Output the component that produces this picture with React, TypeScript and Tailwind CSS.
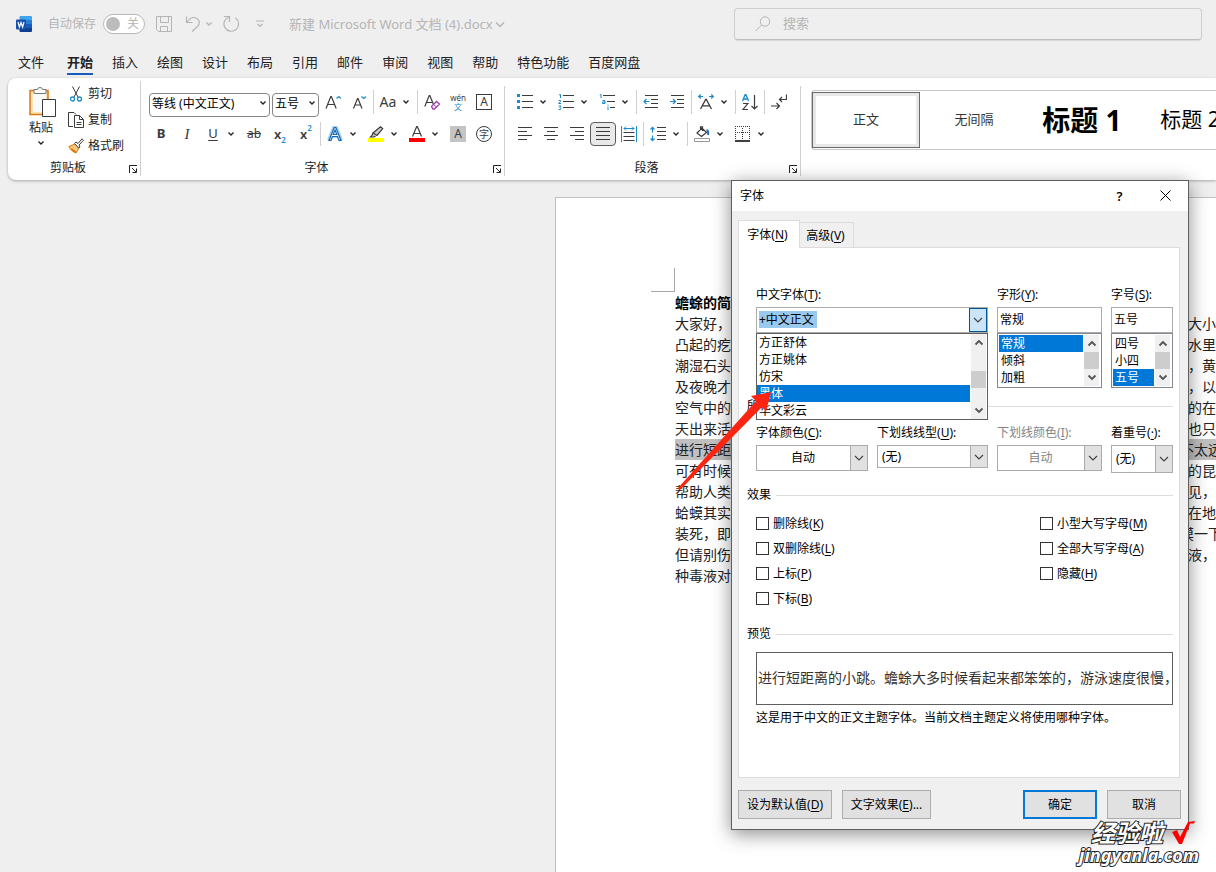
import type { ReactNode } from "react";
import clsx from "clsx";

const TABS = ["文件", "开始", "插入", "绘图", "设计", "布局", "引用", "邮件", "审阅", "视图", "帮助", "特色功能", "百度网盘"];

const LINES = [
  { left: "大家好，今", right: "大小、" },
  { left: "凸起的疙", right: "水里，" },
  { left: "潮湿石头", right: "，黄昏" },
  { left: "及夜晚才", right: "，以便" },
  { left: "空气中的", right: "的在白" },
  { left: "天出来活", right: "也只能" },
  { left: "进行短距", right: "不太远", selected: true, early: true },
  { left: "可有时候", right: "的昆虫" },
  { left: "帮助人类", right: "见，这" },
  { left: "蛤蟆其实", right: "在地上" },
  { left: "装死，即", right: "摸一下", early: true },
  { left: "但请别伤", right: "液，这" },
  { left: "种毒液对", right: "" },
];

const FONTS = ["方正舒体", "方正姚体", "仿宋", "黑体", "华文彩云"];

const STYLES = [
  { name: "正文", text: "text-[13px]", active: true },
  { name: "无间隔", text: "text-[13px]" },
  { name: "标题 1", text: "text-[28px] font-bold text-black" },
  { name: "标题 2", text: "text-[21px] text-black" },
];

const BLUE = "#1e8bcd";

function Svg({ children, w = 16, h = 16, className }: { children: ReactNode; w?: number; h?: number; className?: string }) {
  return (
    <svg width={w} height={h} viewBox={`0 0 ${w} ${h}`} fill="none" stroke="#3b3b3b" className={clsx("shrink-0", className)} aria-hidden="true">
      {children}
    </svg>
  );
}

function Chevron({ className }: { className?: string }) {
  return (
    <Svg w={8} h={6} className={className}>
      <path d="M1.500 1.500 4 4 6.500 1.500" stroke="currentColor" strokeWidth="1.300" />
    </Svg>
  );
}

function IconButton({ label, children, pressed }: { label: string; children: ReactNode; pressed?: boolean }) {
  return (
    <button
      type="button"
      aria-label={label}
      aria-pressed={pressed}
      className={clsx(
        "flex h-6 w-[26px] shrink-0 items-center justify-center rounded-[4px] text-[#3b3b3b]",
        pressed && "border border-[#5c5c5c] bg-[#e9e9e9]"
      )}
    >
      {children}
    </button>
  );
}

function SplitButton({ label, children }: { label: string; children: ReactNode }) {
  return (
    <div className="flex w-[41px] shrink-0 items-center">
      <IconButton label={label}>{children}</IconButton>
      <button type="button" aria-label={`${label}选项`} className="flex h-6 w-[10px] items-center justify-center text-[#222]">
        <Chevron />
      </button>
    </div>
  );
}

function Sep() {
  return <div className="mx-px h-6 w-px shrink-0 bg-[#d0d0d0]" />;
}

function Group({ title, className, children }: { title: string; className?: string; children: ReactNode }) {
  return (
    <section className={clsx("flex shrink-0 flex-col border-r border-[#d0d0d0]", className)}>
      <div className="flex-1">{children}</div>
      <div className="flex h-4 items-center">
        <h2 className="flex-1 text-center text-[12px] leading-4 text-[#222]">{title}</h2>
        <button type="button" aria-label={`${title}设置`} className="mr-0.5 pt-0.5">
          <Svg w={10} h={10}>
            <path d="M1.500 9V1.500H9M4 4l4 4M8.500 4.500v4h-4" stroke="#222" />
          </Svg>
        </button>
      </div>
    </section>
  );
}

function RibbonSelect({ label, value, className }: { label: string; value: string; className: string }) {
  return (
    <div className={clsx("relative h-6 shrink-0", className)}>
      <select aria-label={label} className="h-full w-full appearance-none rounded-[4px] border border-[#868686] bg-white pb-0.5 pl-0.5 text-[12px] leading-5 text-black">
        <option>{value}</option>
      </select>
      <Chevron className="pointer-events-none absolute top-[10px] right-[3px] text-[#222]" />
    </div>
  );
}

function TitleBar() {
  return (
    <header className="flex h-12 items-center text-[#b5b5b5]">
      <div className="flex w-[734px] shrink-0 items-center pl-4">
        <Svg>
          <rect x="3.500" width="12.500" height="4.500" rx="1" fill="#41a5ee" stroke="none" />
          <path d="M3.500 4H16v4H3.500z" fill="#2b7cd3" stroke="none" />
          <path d="M3.500 8H16v4H3.500z" fill="#185abd" stroke="none" />
          <path d="M3.500 12H16v3a1 1 0 0 1-1 1H4.500a1 1 0 0 1-1-1z" fill="#103f91" stroke="none" />
          <rect y="3.500" width="10" height="10" rx="1" fill="#1651ad" stroke="none" />
          <path d="M2 6l1.400 5L5 6.500 6.600 11 8 6" stroke="#fff" strokeWidth="1.200" />
        </Svg>
        <span className="ml-4 text-[12px] leading-5">自动保存</span>
        <button
          type="button"
          role="switch"
          aria-checked="false"
          aria-label="自动保存"
          className="ml-[7px] flex h-5 w-[42px] items-center gap-[7px] rounded-full border border-[#b9b9b9] bg-white pl-0.5 text-[12px] leading-4"
        >
          <span className="h-3.5 w-3.5 rounded-full bg-[#bcbcbc]" />
          关
        </button>
        <button type="button" aria-label="保存" className="ml-[11px]">
          <Svg>
            <path d="M.5.5h15v15h-13l-2-2zM4.500.5v6h8v-6M4.500 15.500v-5h7v5" stroke="#b5b5b5" />
          </Svg>
        </button>
        <button type="button" aria-label="撤消" className="ml-[13px] flex items-center gap-1">
          <Svg>
            <path d="M1.500.5v6h6M1.500 6.500C5 2 9 .5 12 2.500s3 5.500.5 8L7 15.500" stroke="#b5b5b5" strokeWidth="1.200" />
          </Svg>
          <Chevron />
        </button>
        <button type="button" aria-label="恢复" className="ml-[10px]">
          <Svg w={17}>
            <path d="M1 .5h5.500V6M6 1A7.300 7.300 0 1 0 12.500 2" stroke="#b5b5b5" strokeWidth="1.200" />
          </Svg>
        </button>
        <button type="button" aria-label="自定义快速访问工具栏" className="ml-4">
          <Svg w={8} h={8}>
            <path d="M0 1h8M1.500 4 4 6.500 6.500 4" stroke="#b5b5b5" strokeWidth="1.200" />
          </Svg>
        </button>
        <h1 className="ml-[25px] text-[13px] leading-5">新建 Microsoft Word 文档 (4).docx</h1>
        <Svg w={10} h={7} className="ml-0.5">
          <path d="M1 1.500l4 4 4-4" stroke="#b5b5b5" strokeWidth="1.500" />
        </Svg>
      </div>
      <label className="mr-[14px] flex h-8 flex-1 items-center gap-3 rounded-[4px] border border-[#cfcfcf] border-b-[#bdbdbd] pl-5 shadow-[0_1px_1px_rgba(0,0,0,0.1)]">
        <Svg>
          <circle cx="10" cy="5.500" r="4.700" stroke="#b5b5b5" />
          <path d="M6.500 9 .5 15" stroke="#b5b5b5" />
        </Svg>
        <input type="search" placeholder="搜索" aria-label="搜索" className="min-w-0 flex-1 bg-transparent pb-0.5 text-[13px] leading-5 outline-none placeholder:text-[#b5b5b5]" />
      </label>
    </header>
  );
}

function Clipboard() {
  return (
    <Group title="剪贴板" className="w-[133px]">
      <div className="flex text-[12px] text-[#222]">
        <button type="button" className="ml-[18px] flex w-[30px] flex-col items-center self-start pt-1.5">
          <Svg w={30} h={31}>
            <path d="M4 3.500h18v24H4z" stroke="#dd7512" strokeWidth="1.500" fill="#f9e4b5" />
            <path d="M7 6h13v19H7z" fill="#fafafa" stroke="none" />
            <path d="M8 6.500v-4h3.500a2.500 2 0 0 1 5 0H20v4z" fill="#fff" stroke="#777" />
            <path d="M16.500 12.500h13v17h-13z" fill="#fff" />
          </Svg>
          <span className="leading-5">粘贴</span>
          <Chevron className="mt-0.5" />
        </button>
        <div className="ml-3 flex flex-col">
          <button type="button" className="flex h-[26px] items-center gap-1">
            <Svg>
              <path d="M4.500.5 10 11M11.500.5 6 11" />
              <circle cx="4.500" cy="13" r="2" stroke={BLUE} strokeWidth="1.300" />
              <circle cx="11.500" cy="13" r="2" stroke={BLUE} strokeWidth="1.300" />
            </Svg>
            剪切
          </button>
          <button type="button" className="flex h-[26px] items-center gap-1">
            <Svg>
              <path d="M5 14.500H.5V.5H6l2 2M6.500 3.500h5l4 4v8h-9zM11.500 3.500v4h4M8.500 10.500h5M8.500 12.500h5" />
            </Svg>
            复制
          </button>
          <button type="button" className="flex h-[26px] items-center gap-1">
            <Svg>
              <path d="M.8 8.500 7 6l4 4-3 5C5 13.500 2 11.500.8 8.500z" fill="#f7c978" stroke="#dd7512" />
              <path d="M3 11l5 3.500" stroke="#dd7512" strokeWidth="2" />
              <path d="M6.500 5.500 8 4l2 1.500L14 .8l1.500 1.500L11 7l1 2-1.500 1z" fill="#fff" />
            </Svg>
            格式刷
          </button>
        </div>
      </div>
    </Group>
  );
}

function FontGroup() {
  return (
    <Group title="字体" className="w-[364px]">
      <div className="flex h-8 items-center pl-2">
        <RibbonSelect label="字体" value="等线 (中文正文)" className="mr-[2px] w-[121px]" />
        <RibbonSelect label="字号" value="五号" className="mr-px w-[47px]" />
        <IconButton label="增大字号">
          <Svg>
            <path d="M1 14.500 5.800 2.500h.6l4.800 12M2.700 10.500h7" strokeWidth="1.200" />
            <path d="M11.500 4.500 13.800 2.500 16 4.500" stroke={BLUE} strokeWidth="1.200" />
          </Svg>
        </IconButton>
        <IconButton label="减小字号">
          <Svg>
            <path d="M2.500 14.500 6.500 4.500h.5l4 10M3.900 11h5.700" strokeWidth="1.200" />
            <path d="M10.500 2.500 12.800 4.500 15 2.500" stroke={BLUE} strokeWidth="1.200" />
          </Svg>
        </IconButton>
        <Sep />
        <SplitButton label="更改大小写">
          <span className="text-[14px] leading-4">Aa</span>
        </SplitButton>
        <Sep />
        <IconButton label="清除所有格式">
          <Svg>
            <path d="M.8 12.500 5.200 1.500h.6l3.700 9M2.400 8.500h6.200" strokeWidth="1.200" />
            <path d="m7.500 12.500 5-5 3 2.500-5 5h-1.500z" fill="#fff" stroke="#a33fb5" strokeWidth="1.300" />
            <path d="m9.500 10.500 3 2.500" stroke="#a33fb5" />
          </Svg>
        </IconButton>
        <IconButton label="拼音指南">
          <span className="flex flex-col items-center text-[8px] leading-[9px]">
            <span>wén</span>
            <span className="text-[#1e8bcd]">文</span>
          </span>
        </IconButton>
        <IconButton label="字符边框">
          <span className="flex h-4 w-4 items-center justify-center border border-[#3b3b3b] text-[12px] leading-3">A</span>
        </IconButton>
      </div>
      <div className="flex h-8 items-center pl-[7px]">
        <IconButton label="加粗">
          <span className="text-[13px] font-bold">B</span>
        </IconButton>
        <IconButton label="倾斜">
          <span className="font-['Liberation_Serif',serif] text-[15px] italic">I</span>
        </IconButton>
        <SplitButton label="下划线">
          <span className="text-[13px] underline underline-offset-2">U</span>
        </SplitButton>
        <IconButton label="删除线">
          <span className="text-[12px] line-through">ab</span>
        </IconButton>
        <IconButton label="下标">
          <span className="text-[13px] leading-4 font-semibold">x</span>
          <span className="self-end text-[8px] leading-3 font-semibold text-[#1e8bcd]">2</span>
        </IconButton>
        <IconButton label="上标">
          <span className="text-[13px] leading-4 font-semibold">x</span>
          <span className="self-start text-[8px] leading-3 font-semibold text-[#1e8bcd]">2</span>
        </IconButton>
        <Sep />
        <SplitButton label="文本效果和版式">
          <Svg>
            <path d="M2 14.500 7 1.500h2l5 13M4 10h8" stroke="#a9d3f2" strokeWidth="4" />
            <path d="M2 14.500 7.200 1.500h1.600l5.200 13h-2l-1.500-4h-5l-1.500 4zM6.200 8.500h3.600L8 4z" fill="#fff" stroke="#1768b5" strokeWidth="1.200" />
          </Svg>
        </SplitButton>
        <SplitButton label="文本突出显示颜色">
          <Svg>
            <path d="M0 12h16v4H0z" fill="#ffff00" stroke="none" />
            <path d="M5 7 12.500.8l2.200 1.800L9 9.500zM5 7l-1 2.500L2.500 11H6l1.500-1" strokeWidth="1.200" fill="#ccc" />
          </Svg>
        </SplitButton>
        <SplitButton label="字体颜色">
          <Svg>
            <path d="M0 12h16v4H0z" fill="#fe0000" stroke="none" />
            <path d="M3.500 10.500 7.700.5h.6l4.200 10M5 7.500h6" strokeWidth="1.200" />
          </Svg>
        </SplitButton>
        <IconButton label="字符底纹">
          <span className="flex h-4 w-4 items-center justify-center bg-[#c4c4c4] text-[12px] leading-4">A</span>
        </IconButton>
        <IconButton label="带圈字符">
          <span className="flex h-4 w-4 items-center justify-center rounded-full border border-[#3b3b3b] text-[10px] leading-3">字</span>
        </IconButton>
      </div>
    </Group>
  );
}

function ParagraphGroup() {
  return (
    <Group title="段落" className="w-[296px]">
      <div className="flex h-8 items-center pl-[7px]">
        <SplitButton label="项目符号">
          <Svg>
            <path d="M0 0h3v3H0zM0 6h3v3H0zM0 12h3v3H0z" fill={BLUE} stroke="none" />
            <path d="M5 1.500h11M5 7.500h11M5 13.500h11" />
          </Svg>
        </SplitButton>
        <SplitButton label="编号">
          <Svg>
            <path d="M1 1l1.500-.5V4M.5 6.500h2v1.200L.5 9.500H3M.5 12H3l-1.200 1.500L3 14.500l-.5 1h-2" stroke={BLUE} />
            <path d="M5 1.500h11M5 7.500h11M5 13.500h11" />
          </Svg>
        </SplitButton>
        <SplitButton label="多级列表">
          <Svg>
            <path d="M.8 1 2 .5V4M3.500 6.500H6v3H3.500V8H6M9 10.500v1M9 12.500V16" stroke={BLUE} />
            <path d="M4 1.500h12M8 7.500h8M11 13.500h5" />
          </Svg>
        </SplitButton>
        <Sep />
        <IconButton label="减少缩进量">
          <Svg>
            <path d="M2 1.500h13M8 5.500h7M8 9.500h7M2 13.500h13" />
            <path d="M6.500 7.500H1M3.500 5 1 7.500 3.500 10" stroke={BLUE} strokeWidth="1.200" />
          </Svg>
        </IconButton>
        <IconButton label="增加缩进量">
          <Svg>
            <path d="M2 1.500h13M8 5.500h7M8 9.500h7M2 13.500h13" />
            <path d="M1 7.500h5.500M4 5l2.500 2.500L4 10" stroke={BLUE} strokeWidth="1.200" />
          </Svg>
        </IconButton>
        <Sep />
        <SplitButton label="中文版式">
          <Svg>
            <path d="M2.500 15 7.700 5.500h.6L13.500 15M4.300 11.800h7.400" strokeWidth="1.300" />
            <path d="M5 2.500H.7M2.800.5.7 2.500l2.100 2M11 2.500h4.300M13.200.5l2.100 2-2.100 2" stroke={BLUE} strokeWidth="1.200" />
          </Svg>
        </SplitButton>
        <Sep />
        <IconButton label="排序">
          <Svg>
            <path d="M.5 7 3.200.5h.6L6.500 7M1.500 5h4" stroke={BLUE} strokeWidth="1.400" />
            <path d="M1 9.500h4.800L1 15.500h5M12.500 1v14M9.500 12l3 3 3-3" strokeWidth="1.200" />
          </Svg>
        </IconButton>
        <Sep />
        <IconButton label="显示编辑标记">
          <Svg>
            <path d="M15.500.5v5h-7M11 3 8.500 5.500 11 8M0 12h8M5.500 9l3 3-3 3" strokeWidth="1.200" />
          </Svg>
        </IconButton>
      </div>
      <div className="flex h-8 items-center pl-[7px]">
        <IconButton label="左对齐">
          <Svg>
            <path d="M1 1.500h14M1 5.500h9M1 9.500h14M1 13.500h9" />
          </Svg>
        </IconButton>
        <IconButton label="居中">
          <Svg>
            <path d="M1 1.500h14M4 5.500h8M1 9.500h14M4 13.500h8" />
          </Svg>
        </IconButton>
        <IconButton label="右对齐">
          <Svg>
            <path d="M1 1.500h14M6 5.500h9M1 9.500h14M6 13.500h9" />
          </Svg>
        </IconButton>
        <IconButton label="两端对齐" pressed>
          <Svg>
            <path d="M1 1.500h14M1 5.500h14M1 9.500h14M1 13.500h14" />
          </Svg>
        </IconButton>
        <IconButton label="分散对齐">
          <Svg>
            <path d="M2.500 6.500h11M2.500 10.500h11M2.500 14.500h11" />
            <path d="M.5 0v16M15.500 0v16M3 2.500h10M5 .5l-2 2 2 2M11 .5l2 2-2 2" stroke={BLUE} />
          </Svg>
        </IconButton>
        <Sep />
        <SplitButton label="行和段落间距">
          <Svg>
            <path d="M7 1.500h9M7 5.500h9M7 9.500h9M7 13.500h9" />
            <path d="M2.500 1v5.500M.5 3.500l2-2.200 2 2.200M2.500 9.500V15M.5 12.500l2 2.200 2-2.200" stroke={BLUE} strokeWidth="1.200" />
          </Svg>
        </SplitButton>
        <Sep />
        <SplitButton label="底纹">
          <Svg>
            <path d="M.5 12.500h15v3H.5z" stroke="#999" />
            <path d="m3 7 5-5 4.500 4.500-5 4zM6.500 4V.8h2V5" strokeWidth="1.200" />
            <path d="M12.500 4c1.500.5 2 2.500 1.500 5" stroke="#1e6fb5" strokeWidth="2" />
          </Svg>
        </SplitButton>
        <SplitButton label="边框">
          <Svg>
            <path d="M0 .5h15M.5 2v12M14.500 2v12M2 6.500h12M7.500 2v12" strokeDasharray="1 1" />
            <path d="M0 15h15" stroke="#000" strokeWidth="1.500" />
          </Svg>
        </SplitButton>
      </div>
    </Group>
  );
}

function Ribbon() {
  return (
    <div className="ml-2 flex h-[102px] overflow-hidden rounded-l-lg bg-white pt-[3px] pb-1 shadow-[0_1px_3px_rgba(0,0,0,0.3)]">
      <Clipboard />
      <div className="flex pt-[5px]">
        <FontGroup />
        <ParagraphGroup />
      </div>
      <div className="mt-[9px] ml-[10px] flex h-[60px] flex-1 rounded-l-[4px] border border-r-0 border-[#c8c8c8]">
        {STYLES.map((s) => (
          <button
            key={s.name}
            type="button"
            className={clsx(
              "my-px flex w-[108px] shrink-0 items-center justify-center whitespace-nowrap text-[#333]",
              s.text,
              s.active && "border border-[#6a6a6a] shadow-[inset_0_0_0_3px_#e8e8e8]"
            )}
          >
            {s.name}
          </button>
        ))}
      </div>
    </div>
  );
}

function Document() {
  return (
    <main className="flex flex-1 pt-[17px] pl-[555px]">
      <article className="flex-1 border-t border-l border-[#c0c0c0] bg-white pt-[70px] pl-[95px] text-[14px] leading-[21px] whitespace-nowrap text-[#222]">
        <div className="h-6 w-6 border-r border-b border-[#a8a8a8]" />
        <div className="pl-6">
          <h2 className="font-semibold text-black">蟾蜍的简</h2>
          {LINES.map((l) => (
            <p key={l.left} className={clsx("flex h-[21px]", l.selected && "bg-[#c0c0c0]")}>
              <span className={clsx("shrink-0 overflow-hidden", l.early ? "w-[505px]" : "w-[513px]")}>{l.left}</span>
              <span>{l.right}</span>
            </p>
          ))}
        </div>
      </article>
    </main>
  );
}

function Key({ children }: { children: string }) {
  return (
    <>
      (<span className="underline underline-offset-2">{children}</span>)
    </>
  );
}

function SectionTitle({ children }: { children: string }) {
  return (
    <div className="flex h-4 items-center gap-[5px]">
      <h3>{children}</h3>
      <div className="h-px flex-1 bg-[#dcdcdc]" />
    </div>
  );
}

function ThinChevron() {
  return (
    <Svg w={10} h={6}>
      <path d="M1 1l4 4 4-4" stroke="#444" strokeWidth="1.200" />
    </Svg>
  );
}

function ArrowGlyph({ up }: { up?: boolean }) {
  return (
    <Svg w={10} h={7}>
      <path d={up ? "M1.500 5.500 5 2l3.500 3.500" : "M1.500 1.500 5 5l3.500-3.500"} stroke="#555" strokeWidth="1.800" />
    </Svg>
  );
}

function ScrollBar({ thumb }: { thumb: string }) {
  return (
    <div className="mr-px flex w-[15px] shrink-0 flex-col items-center bg-[#f0f0f0]" aria-hidden="true">
      <div className="flex h-[17px] items-center">
        <ArrowGlyph up />
      </div>
      <div className="flex w-full flex-1 flex-col">
        <div className={clsx("h-[17px] w-full bg-[#cdcdcd]", thumb)} />
      </div>
      <div className="flex h-[17px] items-center">
        <ArrowGlyph />
      </div>
    </div>
  );
}

function ListBox({ label, items, active, thumb, className }: { label: string; items: string[]; active: string; thumb: string; className?: string }) {
  return (
    <div className={clsx("flex gap-px border bg-white", className)}>
      <ul role="listbox" aria-label={label} className="flex-1 leading-[17px]">
        {items.map((item) => (
          <li key={item} role="option" aria-selected={item === active} className={clsx("h-[17px] pl-0.5", item === active && "bg-[#0078d7] text-white")}>
            {item}
          </li>
        ))}
      </ul>
      <ScrollBar thumb={thumb} />
    </div>
  );
}

function TextField({ id, label, hotkey, value, items }: { id: string; label: string; hotkey: string; value: string; items: string[] }) {
  return (
    <div>
      <label htmlFor={id} className="block h-6 leading-6">
        {label}
        <Key>{hotkey}</Key>:
      </label>
      <input id={id} defaultValue={value} className="block h-[26px] w-full border border-[#ababab] bg-white pb-0.5 pl-0.5" />
      <ListBox label={label} items={items} active={value} thumb="mt-0" className="border-[#828790] p-px" />
    </div>
  );
}

function DropDown({ id, label, hotkey, value, className, center, disabled }: { id: string; label: string; hotkey: string; value: string; className: string; center?: boolean; disabled?: boolean }) {
  return (
    <div className={clsx(disabled && "text-[#838383]")}>
      <label htmlFor={id} className="block h-6 leading-6 whitespace-nowrap">
        {label}
        <Key>{hotkey}</Key>:
      </label>
      <div className={clsx("relative", className)}>
        <select
          id={id}
          disabled={disabled}
          className={clsx("h-full w-full appearance-none border border-[#ababab] bg-white opacity-100", center ? "pr-[18px] text-center" : "pl-1")}
        >
          <option>{value}</option>
        </select>
        <div className="pointer-events-none absolute inset-y-0 right-0 flex w-[18px] items-center justify-center border border-[#ababab] bg-[#e1e1e1]">
          <ThinChevron />
        </div>
      </div>
    </div>
  );
}

function Check({ label, hotkey }: { label: string; hotkey: string }) {
  return (
    <label className="flex h-[25px] items-center gap-1">
      <input type="checkbox" className="h-[13px] w-[13px] appearance-none border border-[#333] bg-white" />
      <span>
        {label}
        <Key>{hotkey}</Key>
      </span>
    </label>
  );
}

function PushButton({ children, className }: { children: ReactNode; className: string }) {
  return (
    <button type="button" className={clsx("h-[29px] bg-[#e1e1e1] text-center", className)}>
      {children}
    </button>
  );
}

function FontDialog() {
  return (
    <div
      role="dialog"
      aria-label="字体"
      className="absolute top-[180px] left-[731px] w-[458px] border border-[#5f5f5f] bg-[#f0f0f0] text-[12px] leading-4 text-black shadow-[0_4px_18px_rgba(0,0,0,0.45)]"
    >
      <div className="flex h-[30px] items-center bg-white pl-2">
        <h2 className="flex-1">字体</h2>
        <button type="button" aria-label="帮助" className="w-[45px] text-center text-[13px] font-semibold">?</button>
        <button type="button" aria-label="关闭" className="flex w-[46px] justify-center pb-0.5">
          <Svg w={11} h={11}>
            <path d="M.5.5l10 10M10.500.5l-10 10" stroke="#000" />
          </Svg>
        </button>
      </div>
      <div className="pt-[9px] pr-[7px] pb-[10px] pl-1.5">
        <div role="tablist" className="flex h-[27px] items-end">
          <button type="button" role="tab" aria-selected="true" className="relative -mb-px h-7 w-[62px] border border-b-0 border-[#dcdcdc] bg-white pr-[3px]">
            字体<Key>N</Key>
          </button>
          <button type="button" role="tab" aria-selected="false" className="h-[25px] w-[54px] border border-b-0 border-l-0 border-[#dcdcdc] pt-0.5 pr-0.5">
            高级<Key>V</Key>
          </button>
        </div>
        <div className="mr-px h-[531px] border border-[#dcdcdc] bg-white pt-[35px] pr-1.5 pl-2">
          <div className="grid grid-cols-[1fr_105px_62px] gap-[9px] pl-[9px]">
            <div className="relative">
              <label htmlFor="cn-font" className="block h-6 leading-6">
                中文字体<Key>T</Key>:
              </label>
              <div className="flex h-[26px] border border-[#ababab]">
                <div className="flex flex-1 items-center pb-0.5 pl-0.5">
                  <input id="cn-font" defaultValue="+中文正文" className="h-[17px] w-[58px] bg-[#99c9ef]" />
                </div>
                <button type="button" aria-label="展开" className="flex w-[18px] items-center justify-center border border-[#005499] bg-[#cce4f7]">
                  <ThinChevron />
                </button>
              </div>
              <ListBox label="中文字体" items={FONTS} active="黑体" thumb="mt-5" className="absolute top-[50px] z-10 w-full border-[#5f5f5f]" />
            </div>
            <TextField id="style" label="字形" hotkey="Y" value="常规" items={["常规", "倾斜", "加粗"]} />
            <TextField id="size" label="字号" hotkey="S" value="五号" items={["四号", "小四", "五号"]} />
          </div>
          <div className="pt-[10px]">
            <SectionTitle>所有文字</SectionTitle>
          </div>
          <div className="grid grid-cols-[1fr_111px_105px_62px] gap-[9px] pt-[7px] pl-[9px]">
            <DropDown id="color" label="字体颜色" hotkey="C" value="自动" center className="h-[26px]" />
            <DropDown id="underline" label="下划线线型" hotkey="U" value="(无)" className="h-[23px]" />
            <DropDown id="underline-color" label="下划线颜色" hotkey="I" value="自动" center disabled className="h-[26px]" />
            <DropDown id="emphasis" label="着重号" hotkey="·" value="(无)" className="h-7" />
          </div>
          <div className="pt-[14px]">
            <SectionTitle>效果</SectionTitle>
          </div>
          <div className="flex pt-2 pl-[9px]">
            <div className="flex-1">
              <Check label="删除线" hotkey="K" />
              <Check label="双删除线" hotkey="L" />
              <Check label="上标" hotkey="P" />
              <Check label="下标" hotkey="B" />
            </div>
            <div className="w-[133px]">
              <Check label="小型大写字母" hotkey="M" />
              <Check label="全部大写字母" hotkey="A" />
              <Check label="隐藏" hotkey="H" />
            </div>
          </div>
          <div className="pt-[15px]">
            <SectionTitle>预览</SectionTitle>
          </div>
          <div className="pt-[10px] pl-[9px]">
            <div className="flex h-[53px] items-center overflow-hidden border border-[#5f5f5f] pb-0.5 pl-px text-[14px] whitespace-nowrap text-[#333]">
              进行短距离的小跳。蟾蜍大多时候看起来都笨笨的，游泳速度很慢，
            </div>
            <p className="pt-[5px]">这是用于中文的正文主题字体。当前文档主题定义将使用哪种字体。</p>
          </div>
        </div>
        <div className="flex gap-[10px] pt-3">
          <PushButton className="w-[94px] border border-[#adadad]">
            设为默认值<Key>D</Key>
          </PushButton>
          <PushButton className="mr-auto w-[89px] border border-[#adadad]">
            文字效果<Key>E</Key>...
          </PushButton>
          <PushButton className="w-[74px] border-2 border-[#0078d7]">确定</PushButton>
          <PushButton className="w-[74px] border border-[#adadad]">取消</PushButton>
        </div>
      </div>
    </div>
  );
}

function Watermark() {
  return (
    <div className="pointer-events-none absolute top-[820px] right-[17px] flex flex-col items-end font-bold text-white italic [paint-order:stroke_fill] [-webkit-text-stroke:2px_#222]">
      <div className="flex gap-2 pr-1 text-[24px] leading-[26px]">
        经验啦
        <svg width="24" height="26" viewBox="0 0 24 26" aria-hidden="true">
          <path d="M1 12l5-2 3 7L17 2l7-1-1 2.500h-4l-8 20.500H8z" fill="#f00" />
        </svg>
      </div>
      <div className="text-[18px] leading-[18px]">jingyanla.com</div>
    </div>
  );
}

export default function App() {
  return (
    <div className="relative flex min-h-screen flex-col overflow-hidden bg-[#efefef] font-['Noto_Sans','Noto_Sans_CJK_SC',sans-serif]">
      <TitleBar />
      <nav className="flex h-[30px] gap-[19px] pl-[18px] text-[13px] leading-[28px] text-[#222]">
        {TABS.map((tab) => (
          <a
            key={tab}
            href="#"
            className={clsx("h-[27px] first:mr-1", tab === "开始" && "border-b-2 border-[#185abd] font-bold")}
          >
            {tab}
          </a>
        ))}
      </nav>
      <Ribbon />
      <Document />
      <FontDialog />
      <svg className="pointer-events-none absolute top-[385px] left-[670px] z-20" width="110" height="110" viewBox="0 0 110 110" aria-hidden="true">
        <path d="M101 7 81 11l5 5L8 103l2 2 82-83 4 5z" fill="#fe2412" />
      </svg>
      <Watermark />
    </div>
  );
}
